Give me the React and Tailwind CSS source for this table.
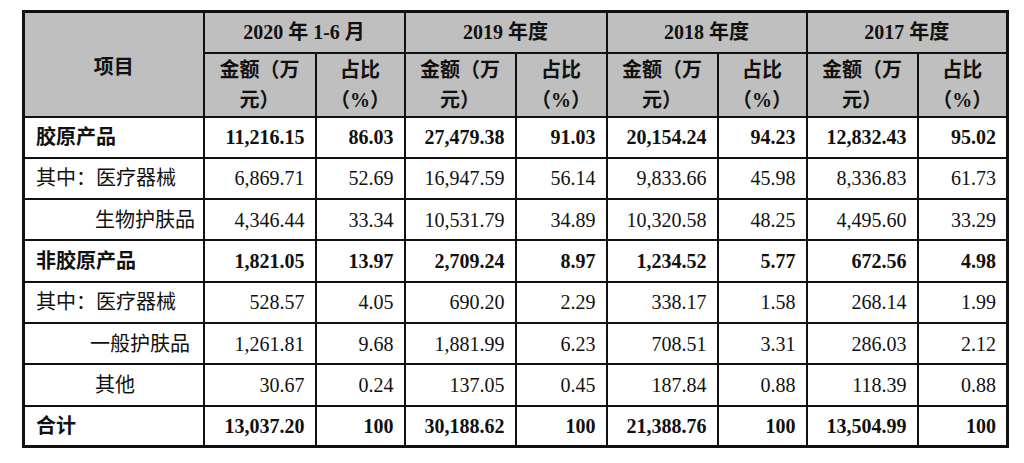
const years = ['2020 年 1-6 月', '2019 年度', '2018 年度', '2017 年度'];

const rows = [
  { label: '胶原产品', bold: true, values: ['11,216.15', '86.03', '27,479.38', '91.03', '20,154.24', '94.23', '12,832.43', '95.02'] },
  { label: '其中：医疗器械', values: ['6,869.71', '52.69', '16,947.59', '56.14', '9,833.66', '45.98', '8,336.83', '61.73'] },
  { label: '生物护肤品', indent: 'pl-[70px]', values: ['4,346.44', '33.34', '10,531.79', '34.89', '10,320.58', '48.25', '4,495.60', '33.29'] },
  { label: '非胶原产品', bold: true, values: ['1,821.05', '13.97', '2,709.24', '8.97', '1,234.52', '5.77', '672.56', '4.98'] },
  { label: '其中：医疗器械', values: ['528.57', '4.05', '690.20', '2.29', '338.17', '1.58', '268.14', '1.99'] },
  { label: '一般护肤品', indent: 'pl-[65px]', values: ['1,261.81', '9.68', '1,881.99', '6.23', '708.51', '3.31', '286.03', '2.12'] },
  { label: '其他', indent: 'pl-[70px]', values: ['30.67', '0.24', '137.05', '0.45', '187.84', '0.88', '118.39', '0.88'] },
  { label: '合计', bold: true, values: ['13,037.20', '100', '30,188.62', '100', '21,388.76', '100', '13,504.99', '100'] },
];

const widths = ['w-[180px]', 'w-[112px]', 'w-[89px]', 'w-[111px]', 'w-[91px]', 'w-[111px]', 'w-[89px]', 'w-[111px]', 'w-[90px]'];

export default function App() {
  return (
    <div className="w-[1024px] h-[463px] bg-white pt-[10px] pl-[22px] font-['Liberation_Serif','Noto_Sans_CJK_SC',serif] text-[20px] text-[#111]">
      <table className="table-fixed border-collapse border-[3px] border-[#111] w-[985px]">
        <colgroup>
          {widths.map((w, i) => (
            <col key={i} className={w} />
          ))}
        </colgroup>
        <thead className="bg-[#bfbfbf] font-bold">
          <tr className="h-[41px]">
            <th rowSpan={2} className="border-2 border-[#111] text-center align-middle pt-[6px]">
              项目
            </th>
            {years.map((y) => (
              <th key={y} colSpan={2} className="border-2 border-[#111] text-center">
                {y}
              </th>
            ))}
          </tr>
          <tr className="h-[64px] leading-[30px]">
            {years.map((y) => [
              <th key={y + 'a'} className="border-2 border-[#111] text-center">
                金额（万<br />元）
              </th>,
              <th key={y + 'b'} className="border-2 border-[#111] text-center">
                占比<br />（%）
              </th>,
            ])}
          </tr>
        </thead>
        <tbody>
          {rows.map((r, i) => (
            <tr key={i} className={'h-[41.3px] ' + (r.bold ? 'font-bold' : '')}>
              <td className={'border-2 border-[#111] ' + (r.indent ? r.indent : 'pl-[11px]')}>{r.label}</td>
              {r.values.map((v, j) => (
                <td key={j} className="border-2 border-[#111] text-right pr-[10px]">
                  {v}
                </td>
              ))}
            </tr>
          ))}
        </tbody>
      </table>
    </div>
  );
}
